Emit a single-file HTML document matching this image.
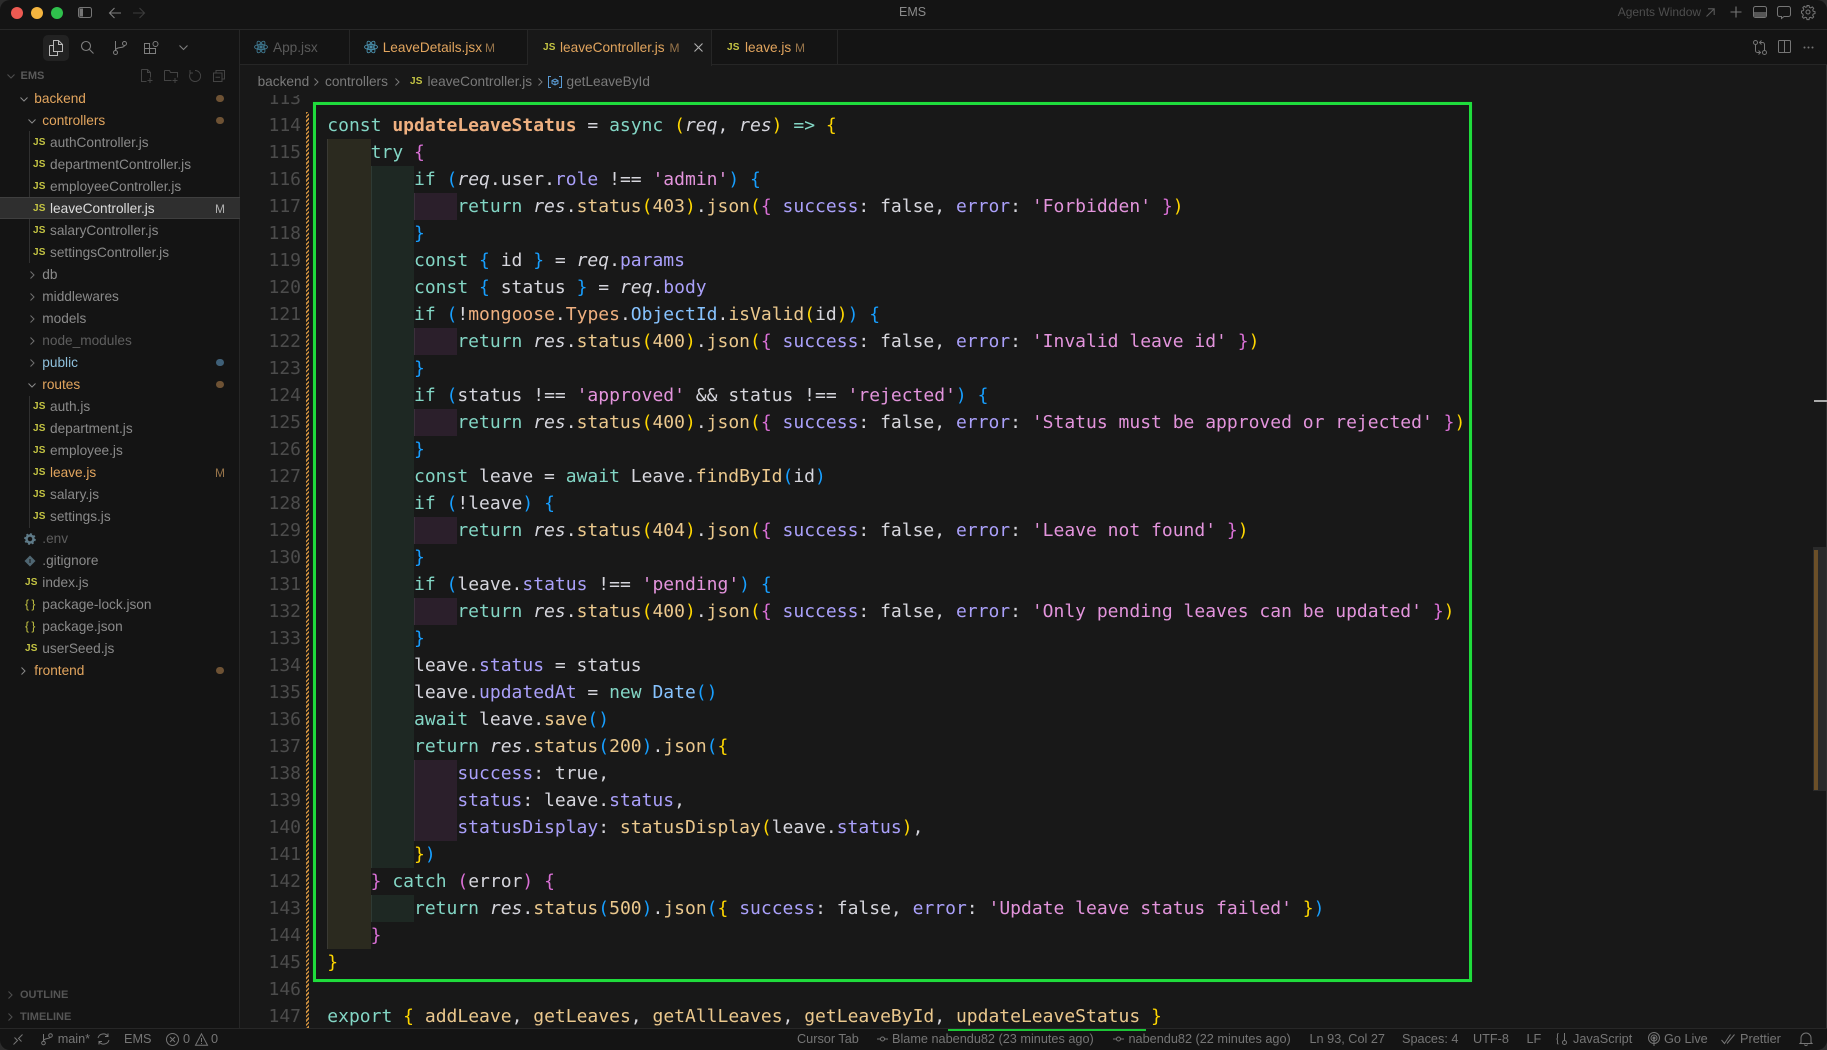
<!DOCTYPE html>
<html><head><meta charset="utf-8"><title>EMS</title>
<style>
html,body{margin:0;padding:0;background:#2c2c2c;width:1827px;height:1050px;overflow:hidden}
*{box-sizing:border-box}
#app{position:absolute;left:0;top:0;width:1827px;height:1050px;background:#181818;border-radius:10px;overflow:hidden;font-family:"Liberation Sans",sans-serif;font-size:13.65px;color:#8a8a8a;box-shadow:inset 0 0 0 1px #303030}
.a{position:absolute;white-space:nowrap}
svg{position:absolute;overflow:visible}
.bar{position:absolute;background:#141414}
#side .row{height:22px;line-height:22px;position:relative;white-space:nowrap}
.o{color:#e2a55e}.w{color:#dcdcdc}.dm{color:#5e5e5e}
.js{position:absolute;font-weight:bold;font-size:10px;color:#c4c443;top:0;letter-spacing:.2px}
.m{position:absolute;left:215px;top:0;font-size:12px;color:#8a8a8a}
.dot{position:absolute;left:216px;top:7px;width:7.5px;height:7.5px;border-radius:50%;background:#6e5234}
.c{position:absolute;top:7px;width:10px;height:8px}
.mono{font-family:"DejaVu Sans Mono","Liberation Mono",monospace;font-size:18px;line-height:27px;margin:0}
#code{position:absolute;left:327.3px;top:95px;width:1480px;height:933px;overflow:hidden}
#code pre{position:absolute;left:0;top:16.5px;color:#d6d6dd}
#nums{position:absolute;left:250px;top:95px;width:51px;height:933px;overflow:hidden}
#nums pre{position:absolute;right:0;top:-10.5px;color:#4c4c4c;text-align:right}
.k{color:#83d6c5}.F{color:#efb080;font-weight:bold}.f{color:#ebc88d}.T{color:#efb080}.p{color:#aaa0fa}.s{color:#e394dc}.n{color:#ebc88d}.i{font-style:italic}.C{color:#87c3ff}.y{color:#ffd700}.q{color:#da70d6}.b{color:#179fff}
.g1,.g2,.g3{position:absolute;border-left:1px solid #3a3a34}
.g1{left:327px;width:43.6px;background:#2b2a1f}
.g2{left:370.6px;width:43.4px;background:#1e2823;border-left-color:#2e3a34}
.g3{left:414px;width:43.4px;background:#2b1f2b;border-left-color:#3c303c}
.tab{position:absolute;top:30px;height:35px;border-right:1px solid #262626}
.st{position:absolute;top:1028px;height:22px;line-height:22px;font-size:12.7px;color:#767676;white-space:nowrap}
</style></head>
<body><div id="app">

<!-- title bar -->
<div class="bar" style="left:0;top:0;width:1827px;height:30px;border-bottom:1px solid #282828"></div>
<div class="a" style="top:7px;width:12px;height:12px;border-radius:50%;background:#ed5a52;left:11px"></div>
<div class="a" style="left:31px;top:7px;width:12px;height:12px;border-radius:50%;background:#f4b53f"></div>
<div class="a" style="left:51px;top:7px;width:12px;height:12px;border-radius:50%;background:#2fc04c"></div>
<svg style="left:78px;top:6px" width="14" height="13" fill="none" stroke="#767676" stroke-width="1"><rect x=".5" y="1.5" width="13" height="10" rx="2"/><rect x="1.5" y="2.5" width="3.5" height="8" fill="#767676" stroke="none"/></svg>
<svg style="left:109px;top:7px" width="12" height="12" fill="none" stroke="#7e7e7e" stroke-width="1.1"><path d="M12 6H.5M5.5 1 .5 6l5 5"/></svg>
<svg style="left:133px;top:7px" width="12" height="12" fill="none" stroke="#3c3c3c" stroke-width="1.1"><path d="M0 6h11.5M6.5 1l5 5-5 5"/></svg>
<div class="a" style="left:899px;top:4px;font-size:12.5px;color:#8a8a8a;line-height:16px">EMS</div>
<div class="a" style="left:1617.7px;top:4px;font-size:12px;color:#4e4e4e;line-height:16px">Agents Window</div>
<svg style="left:1706px;top:8px" width="9" height="9" fill="none" stroke="#5a5a5a" stroke-width="1.1"><path d="M.5 8.5 8 1M2 .8h6.2V7"/></svg>
<svg style="left:1730px;top:6px" width="12" height="12" fill="none" stroke="#767676" stroke-width="1.1"><path d="M6 .5v11M.5 6h11"/></svg>
<svg style="left:1753px;top:6px" width="14" height="12" fill="none" stroke="#767676"><rect x=".5" y=".5" width="13" height="11" rx="2"/><rect x="1" y="6" width="12" height="5" fill="#555" stroke="none"/></svg>
<svg style="left:1777px;top:6px" width="14" height="13" fill="none" stroke="#767676"><path d="M2.5.5h9a2 2 0 0 1 2 2v6a2 2 0 0 1-2 2H7l-2.5 2v-2h-2a2 2 0 0 1-2-2v-6a2 2 0 0 1 2-2z"/></svg>
<svg style="left:1801px;top:5px" width="14" height="14" viewBox="0 0 14 14" fill="none" stroke="#767676"><circle cx="7" cy="7" r="2"/><path d="M6 .5h2l.4 1.8 1.3.6 1.6-1 1.4 1.4-1 1.6.5 1.3 1.8.4v2l-1.8.4-.5 1.3 1 1.6-1.4 1.4-1.6-1-1.3.5-.4 1.8H6l-.4-1.8-1.3-.5-1.6 1-1.4-1.4 1-1.6-.5-1.3L.5 8V6l1.8-.4.5-1.3-1-1.6 1.4-1.4 1.6 1 1.3-.6z"/></svg>

<!-- tabs -->
<div class="bar" style="left:240px;top:30px;width:1587px;height:35px;border-bottom:1px solid #262626"></div>
<div class="tab" style="left:240px;width:110px"></div>
<div class="tab" style="left:350px;width:178px"></div>
<div class="tab" style="left:528px;width:184px;background:#181818;height:35.5px;border-left:0"></div>
<div class="tab" style="left:712px;width:126px"></div>
<svg style="left:254px;top:40px" width="14" height="14" viewBox="0 0 14 14" fill="none" stroke="#3f7890" stroke-width=".9"><circle cx="7" cy="7" r="1.2" fill="#3f7890"/><ellipse cx="7" cy="7" rx="6.5" ry="2.6"/><ellipse cx="7" cy="7" rx="6.5" ry="2.6" transform="rotate(60 7 7)"/><ellipse cx="7" cy="7" rx="6.5" ry="2.6" transform="rotate(120 7 7)"/></svg>
<div class="a" style="left:273px;top:38px;line-height:20px;color:#5a5a5a">App.jsx</div>
<svg style="left:364px;top:40px" width="14" height="14" viewBox="0 0 14 14" fill="none" stroke="#4a90ad" stroke-width=".9"><circle cx="7" cy="7" r="1.2" fill="#4a90ad"/><ellipse cx="7" cy="7" rx="6.5" ry="2.6"/><ellipse cx="7" cy="7" rx="6.5" ry="2.6" transform="rotate(60 7 7)"/><ellipse cx="7" cy="7" rx="6.5" ry="2.6" transform="rotate(120 7 7)"/></svg>
<div class="a o" style="left:382.7px;top:38px;line-height:20px">LeaveDetails.jsx</div>
<div class="a" style="left:485px;top:38px;line-height:20px;font-size:12px;color:#97744a">M</div>
<div class="a js" style="left:543px;top:38px;line-height:20px">JS</div>
<div class="a o" style="left:560px;top:38px;line-height:20px">leaveController.js</div>
<div class="a" style="left:669.5px;top:38px;line-height:20px;font-size:12px;color:#97744a">M</div>
<svg style="left:693.5px;top:42.5px" width="9" height="9" fill="none" stroke="#b0b0b0" stroke-width="1.1"><path d="M.5.5l8 8M8.5.5l-8 8"/></svg>
<div class="a js" style="left:727px;top:38px;line-height:20px">JS</div>
<div class="a o" style="left:745px;top:38px;line-height:20px">leave.js</div>
<div class="a" style="left:795px;top:38px;line-height:20px;font-size:12px;color:#97744a">M</div>
<svg style="left:1753px;top:40px" width="14" height="15" fill="none" stroke="#767676"><circle cx="2.5" cy="2.5" r="2"/><circle cx="11.5" cy="12.5" r="2"/><path d="M2.5 4.5v6a2 2 0 0 0 2 2h2M5.5 10.5l2 2-2 2M11.5 10.500v-6a2 2 0 0 0-2-2h-2M8.500 4.500l-2-2 2-2"/></svg>
<svg style="left:1778px;top:40px" width="13" height="13" fill="none" stroke="#767676"><rect x=".5" y=".5" width="12" height="12" rx="1"/><path d="M6.500.5v12"/></svg>
<svg style="left:1803px;top:46px" width="11" height="3" fill="#767676"><circle cx="1.500" cy="1.500" r="1"/><circle cx="5.500" cy="1.500" r="1"/><circle cx="9.500" cy="1.500" r="1"/></svg>

<!-- sidebar -->
<div class="bar" style="left:0;top:30px;width:240px;height:998px;border-right:1px solid #262626"></div>
<div class="a" style="left:43px;top:35px;width:26px;height:26px;border-radius:5px;background:#222"></div>
<svg style="left:49px;top:40px" width="14" height="16" fill="none" stroke="#b8b8b8"><path d="M4.500.5h5l4 4v7H4.500zM9.500.5v4h4"/><path d="M.5 5.500h4v0M.5 5.500v10h8v-4"/></svg>
<svg style="left:81px;top:41px" width="13" height="13" fill="none" stroke="#7e7e7e" stroke-width="1.100"><circle cx="5" cy="5" r="4.500"/><path d="M8.500 8.500l4 4"/></svg>
<svg style="left:113px;top:41px" width="14" height="14" fill="none" stroke="#7e7e7e"><circle cx="2.500" cy="11.500" r="2"/><circle cx="11.500" cy="2.500" r="2"/><path d="M2.500 0v9.500M2.500 9.500c0-4 9-2 9-5"/></svg>
<svg style="left:144px;top:41px" width="15" height="14" fill="none" stroke="#7e7e7e"><path d="M.5 2.500h5v10h-5zM5.500 7.500h6v5h-6M.5 7.500h5"/><circle cx="11.500" cy="3" r="2.500"/></svg>
<svg style="left:179px;top:45px" width="9" height="6" fill="none" stroke="#7e7e7e" stroke-width="1.100"><path d="M.5.500l4 4 4-4"/></svg>

<svg style="left:7px;top:74px" width="8" height="5" fill="none" stroke="#4e4e4e" stroke-width="1.100"><path d="M.5.500l3.500 3.500L7.500.500"/></svg>
<div class="a" style="left:20.500px;top:68px;line-height:16px;font-size:11px;font-weight:bold;color:#5a5a5a">EMS</div>
<svg style="left:141px;top:69px" width="14" height="14" fill="none" stroke="#444"><path d="M.5.500h6l3 3v5M.5.500v12h5M9 9v5M6.500 11.500h5M6.500.500v3h3"/></svg>
<svg style="left:164px;top:69px" width="15" height="14" fill="none" stroke="#444"><path d="M.5 1.500h5l1 2h7v5M.5 1.500v10h7M11 9v5M8.500 11.500h5"/></svg>
<svg style="left:189px;top:70px" width="12" height="12" fill="none" stroke="#444"><path d="M1.500 3A5.500 5.500 0 1 0 6 .5M1 0v3h3"/></svg>
<svg style="left:213px;top:70px" width="12" height="12" fill="none" stroke="#444"><rect x=".5" y="3" width="8.500" height="8.500"/><path d="M3 3V.5h8.500V9H9M2.500 7.200h4.500"/></svg>

<div class="a" style="left:28.500px;top:131px;width:1px;height:132px;background:#303030"></div>
<div class="a" style="left:28.500px;top:396px;width:1px;height:132px;background:#303030"></div>
<div class="a" style="left:0;top:197px;width:240px;height:22px;background:#2f2f2f;border-top:1px solid #3f3f3f;border-bottom:1px solid #3f3f3f"></div>

<div id="side" class="a" style="left:0;top:87.500px;width:240px">
<div class="row o"><svg class="c" style="left:20px;top:9px" width="8" height="5" fill="none" stroke="#8a8a8a"><path d="M.5.500l3.500 3.500L7.500.500"/></svg><span class="a" style="left:34.300px">backend</span><i class="dot"></i></div>
<div class="row o"><svg class="c" style="left:28px;top:9px" width="8" height="5" fill="none" stroke="#8a8a8a"><path d="M.5.500l3.500 3.500L7.500.500"/></svg><span class="a" style="left:42.300px">controllers</span><i class="dot"></i></div>
<div class="row"><span class="js" style="left:33px">JS</span><span class="a" style="left:50px">authController.js</span></div>
<div class="row"><span class="js" style="left:33px">JS</span><span class="a" style="left:50px">departmentController.js</span></div>
<div class="row"><span class="js" style="left:33px">JS</span><span class="a" style="left:50px">employeeController.js</span></div>
<div class="row w"><span class="js" style="left:33px">JS</span><span class="a" style="left:50px">leaveController.js</span><span class="m" style="color:#b0b0b0">M</span></div>
<div class="row"><span class="js" style="left:33px">JS</span><span class="a" style="left:50px">salaryController.js</span></div>
<div class="row"><span class="js" style="left:33px">JS</span><span class="a" style="left:50px">settingsController.js</span></div>
<div class="row"><svg class="c" style="left:30px;top:7px" width="5" height="8" fill="none" stroke="#707070"><path d="M.5.500L4 4 .5 7.500"/></svg><span class="a" style="left:42.300px">db</span></div>
<div class="row"><svg class="c" style="left:30px;top:7px" width="5" height="8" fill="none" stroke="#707070"><path d="M.5.500L4 4 .5 7.500"/></svg><span class="a" style="left:42.300px">middlewares</span></div>
<div class="row"><svg class="c" style="left:30px;top:7px" width="5" height="8" fill="none" stroke="#707070"><path d="M.5.500L4 4 .5 7.500"/></svg><span class="a" style="left:42.300px">models</span></div>
<div class="row dm"><svg class="c" style="left:30px;top:7px" width="5" height="8" fill="none" stroke="#707070"><path d="M.5.500L4 4 .5 7.500"/></svg><span class="a" style="left:42.300px">node_modules</span></div>
<div class="row" style="color:#8fc0dc"><svg class="c" style="left:30px;top:7px" width="5" height="8" fill="none" stroke="#707070"><path d="M.5.500L4 4 .5 7.500"/></svg><span class="a" style="left:42.300px">public</span><i class="dot" style="background:#3f6078"></i></div>
<div class="row o"><svg class="c" style="left:28px;top:9px" width="8" height="5" fill="none" stroke="#8a8a8a"><path d="M.5.500l3.500 3.500L7.500.500"/></svg><span class="a" style="left:42.300px">routes</span><i class="dot"></i></div>
<div class="row"><span class="js" style="left:33px">JS</span><span class="a" style="left:50px">auth.js</span></div>
<div class="row"><span class="js" style="left:33px">JS</span><span class="a" style="left:50px">department.js</span></div>
<div class="row"><span class="js" style="left:33px">JS</span><span class="a" style="left:50px">employee.js</span></div>
<div class="row o"><span class="js" style="left:33px">JS</span><span class="a" style="left:50px">leave.js</span><span class="m" style="color:#97744a">M</span></div>
<div class="row"><span class="js" style="left:33px">JS</span><span class="a" style="left:50px">salary.js</span></div>
<div class="row"><span class="js" style="left:33px">JS</span><span class="a" style="left:50px">settings.js</span></div>
<div class="row dm"><svg style="left:24px;top:5px" width="12" height="12" viewBox="0 0 12 12"><circle cx="6" cy="6" r="3.500" fill="none" stroke="#5e7a88" stroke-width="2.500"/><circle cx="6" cy="6" r="5" fill="none" stroke="#5e7a88" stroke-width="1.600" stroke-dasharray="2 1.900"/></svg><span class="a" style="left:42.300px">.env</span></div>
<div class="row"><svg style="left:24px;top:5px" width="12" height="12" viewBox="0 0 12 12"><path d="M6 .5 11.500 6 6 11.500.5 6z" fill="#4f6672"/><path d="M6 4v4" stroke="#141414"/></svg><span class="a" style="left:42.300px">.gitignore</span></div>
<div class="row"><span class="js" style="left:25px">JS</span><span class="a" style="left:42.300px">index.js</span></div>
<div class="row"><span class="js" style="left:25px;font-size:12px;font-weight:normal;letter-spacing:-.5px;top:-1px">{ }</span><span class="a" style="left:42.300px">package-lock.json</span></div>
<div class="row"><span class="js" style="left:25px;font-size:12px;font-weight:normal;letter-spacing:-.5px;top:-1px">{ }</span><span class="a" style="left:42.300px">package.json</span></div>
<div class="row"><span class="js" style="left:25px">JS</span><span class="a" style="left:42.300px">userSeed.js</span></div>
<div class="row o"><svg class="c" style="left:21px;top:7px" width="5" height="8" fill="none" stroke="#8a8a8a"><path d="M.5.500L4 4 .5 7.500"/></svg><span class="a" style="left:34.300px">frontend</span><i class="dot"></i></div>
</div>

<svg style="left:8px;top:991px" width="5" height="8" fill="none" stroke="#4e4e4e" stroke-width="1.100"><path d="M.5.500L4 4 .5 7.500"/></svg>
<div class="a" style="left:20px;top:987px;line-height:16px;font-size:11px;font-weight:bold;color:#555">OUTLINE</div>
<svg style="left:8px;top:1013px" width="5" height="8" fill="none" stroke="#4e4e4e" stroke-width="1.100"><path d="M.5.500L4 4 .5 7.500"/></svg>
<div class="a" style="left:20px;top:1009px;line-height:16px;font-size:11px;font-weight:bold;color:#555">TIMELINE</div>

<!-- breadcrumbs -->
<div class="a" style="left:257.600px;top:73px;line-height:18px;color:#7a7a7a">backend</div>
<svg style="left:314px;top:78px" width="5" height="8" fill="none" stroke="#7a7a7a"><path d="M.5.500L4 4 .5 7.500"/></svg>
<div class="a" style="left:325px;top:73px;line-height:18px;color:#7a7a7a">controllers</div>
<svg style="left:395px;top:78px" width="5" height="8" fill="none" stroke="#7a7a7a"><path d="M.5.500L4 4 .5 7.500"/></svg>
<div class="a js" style="left:410px;top:73px;line-height:18px">JS</div>
<div class="a" style="left:427.500px;top:73px;line-height:18px;color:#7a7a7a">leaveController.js</div>
<svg style="left:538px;top:78px" width="5" height="8" fill="none" stroke="#7a7a7a"><path d="M.5.500L4 4 .5 7.500"/></svg>
<svg style="left:548px;top:76px" width="14" height="12" fill="none" stroke="#5a9bd4"><path d="M3 .5H.5v11H3M11 .5h2.500v11H11"/><path d="M7 3l3 1.500v3L7 9 4 7.500v-3zM4 4.500l3 1.500 3-1.500M7 6v3"/></svg>
<div class="a" style="left:566.500px;top:73px;line-height:18px;color:#7a7a7a">getLeaveById</div>

<!-- guides -->
<div class="g1" style="top:138.500px;height:810px"></div>
<div class="g2" style="top:165.500px;height:702px"></div>
<div class="g2" style="top:894.500px;height:27px"></div>
<div class="g3" style="top:192.500px;height:27px"></div>
<div class="g3" style="top:327.500px;height:27px"></div>
<div class="g3" style="top:408.500px;height:27px"></div>
<div class="g3" style="top:516.500px;height:27px"></div>
<div class="g3" style="top:597.500px;height:27px"></div>
<div class="g3" style="top:759.500px;height:81px"></div>

<!-- line numbers -->
<div id="nums"><pre class="mono">113
114
115
116
117
118
119
120
121
122
123
124
125
126
127
128
129
130
131
132
133
134
135
136
137
138
139
140
141
142
143
144
145
146
147</pre></div>

<!-- gutter hatch -->
<div class="a" style="left:306px;top:111.500px;width:3px;height:916.500px;background:repeating-linear-gradient(135deg,#d0913f 0,#d0913f 1.500px,#181818 1.500px,#181818 3px)"></div>

<!-- code -->
<div id="code"><pre class="mono"><span class="k">const</span> <span class="F">updateLeaveStatus</span> = <span class="k">async</span> <span class="y">(</span><span class="i">req</span>, <span class="i">res</span><span class="y">)</span> <span class="k">=&gt;</span> <span class="y">{</span>
    <span class="k">try</span> <span class="q">{</span>
        <span class="k">if</span> <span class="b">(</span><span class="i">req</span>.user.<span class="p">role</span> !== <span class="s">'admin'</span><span class="b">)</span> <span class="b">{</span>
            <span class="k">return</span> <span class="i">res</span>.<span class="f">status</span><span class="y">(</span><span class="n">403</span><span class="y">)</span>.<span class="f">json</span><span class="y">(</span><span class="q">{</span> <span class="p">success</span>: false, <span class="p">error</span>: <span class="s">'Forbidden'</span> <span class="q">}</span><span class="y">)</span>
        <span class="b">}</span>
        <span class="k">const</span> <span class="b">{</span> id <span class="b">}</span> = <span class="i">req</span>.<span class="p">params</span>
        <span class="k">const</span> <span class="b">{</span> status <span class="b">}</span> = <span class="i">req</span>.<span class="p">body</span>
        <span class="k">if</span> <span class="b">(</span>!<span class="T">mongoose</span>.<span class="T">Types</span>.<span class="C">ObjectId</span>.<span class="f">isValid</span><span class="y">(</span>id<span class="y">)</span><span class="b">)</span> <span class="b">{</span>
            <span class="k">return</span> <span class="i">res</span>.<span class="f">status</span><span class="y">(</span><span class="n">400</span><span class="y">)</span>.<span class="f">json</span><span class="y">(</span><span class="q">{</span> <span class="p">success</span>: false, <span class="p">error</span>: <span class="s">'Invalid leave id'</span> <span class="q">}</span><span class="y">)</span>
        <span class="b">}</span>
        <span class="k">if</span> <span class="b">(</span>status !== <span class="s">'approved'</span> &amp;&amp; status !== <span class="s">'rejected'</span><span class="b">)</span> <span class="b">{</span>
            <span class="k">return</span> <span class="i">res</span>.<span class="f">status</span><span class="y">(</span><span class="n">400</span><span class="y">)</span>.<span class="f">json</span><span class="y">(</span><span class="q">{</span> <span class="p">success</span>: false, <span class="p">error</span>: <span class="s">'Status must be approved or rejected'</span> <span class="q">}</span><span class="y">)</span>
        <span class="b">}</span>
        <span class="k">const</span> leave = <span class="k">await</span> Leave.<span class="f">findById</span><span class="b">(</span>id<span class="b">)</span>
        <span class="k">if</span> <span class="b">(</span>!leave<span class="b">)</span> <span class="b">{</span>
            <span class="k">return</span> <span class="i">res</span>.<span class="f">status</span><span class="y">(</span><span class="n">404</span><span class="y">)</span>.<span class="f">json</span><span class="y">(</span><span class="q">{</span> <span class="p">success</span>: false, <span class="p">error</span>: <span class="s">'Leave not found'</span> <span class="q">}</span><span class="y">)</span>
        <span class="b">}</span>
        <span class="k">if</span> <span class="b">(</span>leave.<span class="p">status</span> !== <span class="s">'pending'</span><span class="b">)</span> <span class="b">{</span>
            <span class="k">return</span> <span class="i">res</span>.<span class="f">status</span><span class="y">(</span><span class="n">400</span><span class="y">)</span>.<span class="f">json</span><span class="y">(</span><span class="q">{</span> <span class="p">success</span>: false, <span class="p">error</span>: <span class="s">'Only pending leaves can be updated'</span> <span class="q">}</span><span class="y">)</span>
        <span class="b">}</span>
        leave.<span class="p">status</span> = status
        leave.<span class="p">updatedAt</span> = <span class="k">new</span> <span class="C">Date</span><span class="b">()</span>
        <span class="k">await</span> leave.<span class="f">save</span><span class="b">()</span>
        <span class="k">return</span> <span class="i">res</span>.<span class="f">status</span><span class="b">(</span><span class="n">200</span><span class="b">)</span>.<span class="f">json</span><span class="b">(</span><span class="y">{</span>
            <span class="p">success</span>: true,
            <span class="p">status</span>: leave.<span class="p">status</span>,
            <span class="p">statusDisplay</span>: <span class="f">statusDisplay</span><span class="y">(</span>leave.<span class="p">status</span><span class="y">)</span>,
        <span class="y">}</span><span class="b">)</span>
    <span class="q">}</span> <span class="k">catch</span> <span class="q">(</span>error<span class="q">)</span> <span class="q">{</span>
        <span class="k">return</span> <span class="i">res</span>.<span class="f">status</span><span class="b">(</span><span class="n">500</span><span class="b">)</span>.<span class="f">json</span><span class="b">(</span><span class="y">{</span> <span class="p">success</span>: false, <span class="p">error</span>: <span class="s">'Update leave status failed'</span> <span class="y">}</span><span class="b">)</span>
    <span class="q">}</span>
<span class="y">}</span>

<span class="k">export</span> <span class="y">{</span> <span class="f">addLeave</span>, <span class="f">getLeaves</span>, <span class="f">getAllLeaves</span>, <span class="f">getLeaveById</span>, <span class="f">updateLeaveStatus</span> <span class="y">}</span></pre></div>

<!-- green annotation -->
<div class="a" style="left:312.500px;top:101.500px;width:1159.500px;height:880px;border:3px solid #1fdc3c;box-shadow:0 0 1px #0d5a18"></div>

<!-- scrollbar -->
<div class="a" style="left:1813px;top:546.500px;width:13px;height:244px;background:#2a2a2a"></div>
<div class="a" style="left:1814px;top:550px;width:4px;height:240px;background:#6b4f28"></div>
<div class="a" style="left:1814px;top:400px;width:13px;height:2px;background:#aaa"></div>

<!-- status bar -->
<div class="bar" style="left:0;top:1028px;width:1827px;height:22px;border-top:1px solid #272727"></div>
<div class="a" style="left:948px;top:1029px;width:198px;height:2px;background:#1cc536"></div>
<svg style="left:13px;top:1034px" width="10" height="11" fill="none" stroke="#767676"><path d="M.5 10.500l4-4-3-3M9.500.5l-4 4 3 3"/></svg>
<svg style="left:41px;top:1033px" width="12" height="13" fill="none" stroke="#767676"><circle cx="2.500" cy="10" r="1.800"/><circle cx="9.500" cy="2.500" r="1.800"/><path d="M2.500 8V1M2.500 8c0-3 7-2 7-4"/></svg>
<div class="st" style="left:57.700px">main*</div>
<svg style="left:97px;top:1033px" width="13" height="12" fill="none" stroke="#767676"><path d="M1 5a5.500 5.500 0 0 1 10-1.500M12 7a5.500 5.500 0 0 1-10 1.500M11 .5v3H8M2 11.500v-3h3"/></svg>
<div class="st" style="left:124px">EMS</div>
<svg style="left:166px;top:1033px" width="13" height="13" fill="none" stroke="#767676"><circle cx="6.500" cy="6.500" r="6"/><path d="M4 4l5 5M9 4l-5 5"/></svg>
<div class="st" style="left:183px">0</div>
<svg style="left:195px;top:1033px" width="13" height="13" fill="none" stroke="#767676"><path d="M6.500.8l6 11.500H.5zM6.500 5v4M6.500 10v1"/></svg>
<div class="st" style="left:211px">0</div>
<div class="st" style="left:797px">Cursor Tab</div>
<svg style="left:877px;top:1035px" width="11" height="8" fill="none" stroke="#767676"><circle cx="5.500" cy="4" r="2"/><path d="M0 4h3.500M7.500 4H11"/></svg>
<div class="st" style="left:892px">Blame nabendu82 (23 minutes ago)</div>
<svg style="left:1113px;top:1035px" width="11" height="8" fill="none" stroke="#767676"><circle cx="5.500" cy="4" r="2"/><path d="M0 4h3.500M7.500 4H11"/></svg>
<div class="st" style="left:1128.500px">nabendu82 (22 minutes ago)</div>
<div class="st" style="left:1309.500px">Ln 93, Col 27</div>
<div class="st" style="left:1402px">Spaces: 4</div>
<div class="st" style="left:1473px">UTF-8</div>
<div class="st" style="left:1526.500px">LF</div>
<svg style="left:1556px;top:1032px" width="12" height="14" fill="none" stroke="#767676"><path d="M2.500 1.500C1 1.500 1.500 3 1.500 5S.5 7 .5 7s1 0 1 2-.5 3 1 3"/><circle cx="8.500" cy="10.500" r="2"/><path d="M8.500 8.500V1"/></svg>
<div class="st" style="left:1573px">JavaScript</div>
<svg style="left:1648px;top:1032px" width="12" height="14" fill="none" stroke="#767676"><circle cx="6" cy="6" r="5.500"/><circle cx="6" cy="6" r="3"/><circle cx="6" cy="6" r="1" fill="#767676"/><path d="M6 7v7"/></svg>
<div class="st" style="left:1664px">Go Live</div>
<svg style="left:1721px;top:1034px" width="14" height="10" fill="none" stroke="#767676"><path d="M.5 6l3 3.500L9.500.5M6 9.500 13.500.5"/></svg>
<div class="st" style="left:1740px">Prettier</div>
<svg style="left:1800px;top:1032px" width="12" height="14" fill="none" stroke="#767676"><path d="M1 10.500V6a5 5 0 0 1 10 0v4.500l1 1H0zM4.500 12.500c.5 1.500 2.500 1.500 3 0"/></svg>

</div></body></html>
